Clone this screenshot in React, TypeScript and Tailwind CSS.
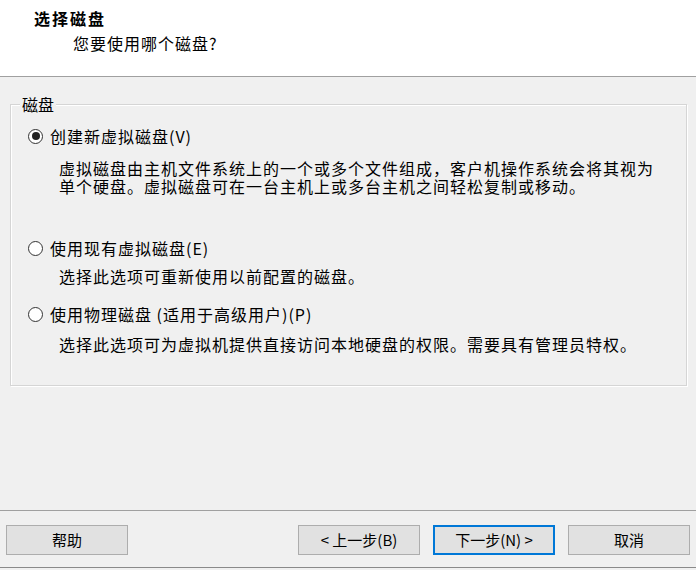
import React from 'react';

const FONT = { fontFamily: '"Noto Sans CJK SC", "Noto Sans", sans-serif' };

function Radio({ checked }: { checked?: boolean }) {
    return (
        <span className="w-[15px] h-[15px] rounded-full border border-[#333] bg-white flex items-center justify-center shrink-0">
            {checked && <span className="w-[8px] h-[8px] rounded-full bg-[#222]" />}
        </span>
    );
}

function Option({ label, checked, className }: { label: string; checked?: boolean; className?: string }) {
    return (
        <label className={`flex items-center h-[20px] pl-[17px] ${className ?? ''}`}>
            <Radio checked={checked} />
            <span className="ml-[7px]">{label}</span>
        </label>
    );
}

function Btn({ children, primary, className }: { children: React.ReactNode; primary?: boolean; className?: string }) {
    return (
        <button
            className={`w-[122px] h-[30px] bg-[#e1e1e1] text-[15px] text-black flex items-center justify-center ${primary ? 'border-2 border-[#0078d7]' : 'border border-[#adadad]'} ${className ?? ''}`}
        >
            {children}
        </button>
    );
}

export default function App() {
    return (
        <div className="w-[696px] h-[570px] bg-[#f0f0f0] flex flex-col text-black text-[16px] tracking-[1px] pb-[2px]" style={FONT}>
            {/* Header */}
            <div className="h-[77px] bg-white border-b border-[#a0a0a0] pt-[8px] shrink-0">
                <div className="pl-[34px] font-bold leading-[20px] tracking-[2px]">选择磁盘</div>
                <div className="pl-[73px] mt-[5px] leading-[20px]">您要使用哪个磁盘?</div>
            </div>

            {/* Disk group */}
            <div className="pl-[10px] pr-[9px] mt-[27px]">
                <div className="border border-[#d5d5d5] shadow-[inset_1px_1px_0_#fff,1px_1px_0_#fff] h-[282px]">
                    <div className="-mt-[11px] ml-[9px] w-fit px-[2px] bg-[#f0f0f0] leading-[20px] tracking-normal">磁盘</div>
                    <Option label="创建新虚拟磁盘(V)" checked className="mt-[12px]" />
                    <div className="pl-[48px] mt-[13px] leading-[18px]">
                        <div>虚拟磁盘由主机文件系统上的一个或多个文件组成，客户机操作系统会将其视为</div>
                        <div>单个硬盘。虚拟磁盘可在一台主机上或多台主机之间轻松复制或移动。</div>
                    </div>
                    <Option label="使用现有虚拟磁盘(E)" className="mt-[43px]" />
                    <div className="pl-[48px] mt-[9px] leading-[18px]">选择此选项可重新使用以前配置的磁盘。</div>
                    <Option label="使用物理磁盘 (适用于高级用户)(P)" className="mt-[19px]" />
                    <div className="pl-[48px] mt-[11px] leading-[18px]">选择此选项可为虚拟机提供直接访问本地硬盘的权限。需要具有管理员特权。</div>
                </div>
            </div>

            <div className="flex-1" />

            {/* Footer */}
            <div className="h-[58px] border-t border-b border-t-[#a0a0a0] border-b-[#8a8a8a] px-[6px] pt-[14px] flex items-start shrink-0 tracking-normal">
                <Btn>帮助</Btn>
                <div className="flex-1" />
                <Btn className="mr-[13px]">&lt; 上一步(B)</Btn>
                <Btn primary className="mr-[13px]">下一步(N) &gt;</Btn>
                <Btn>取消</Btn>
            </div>
        </div>
    );
}
